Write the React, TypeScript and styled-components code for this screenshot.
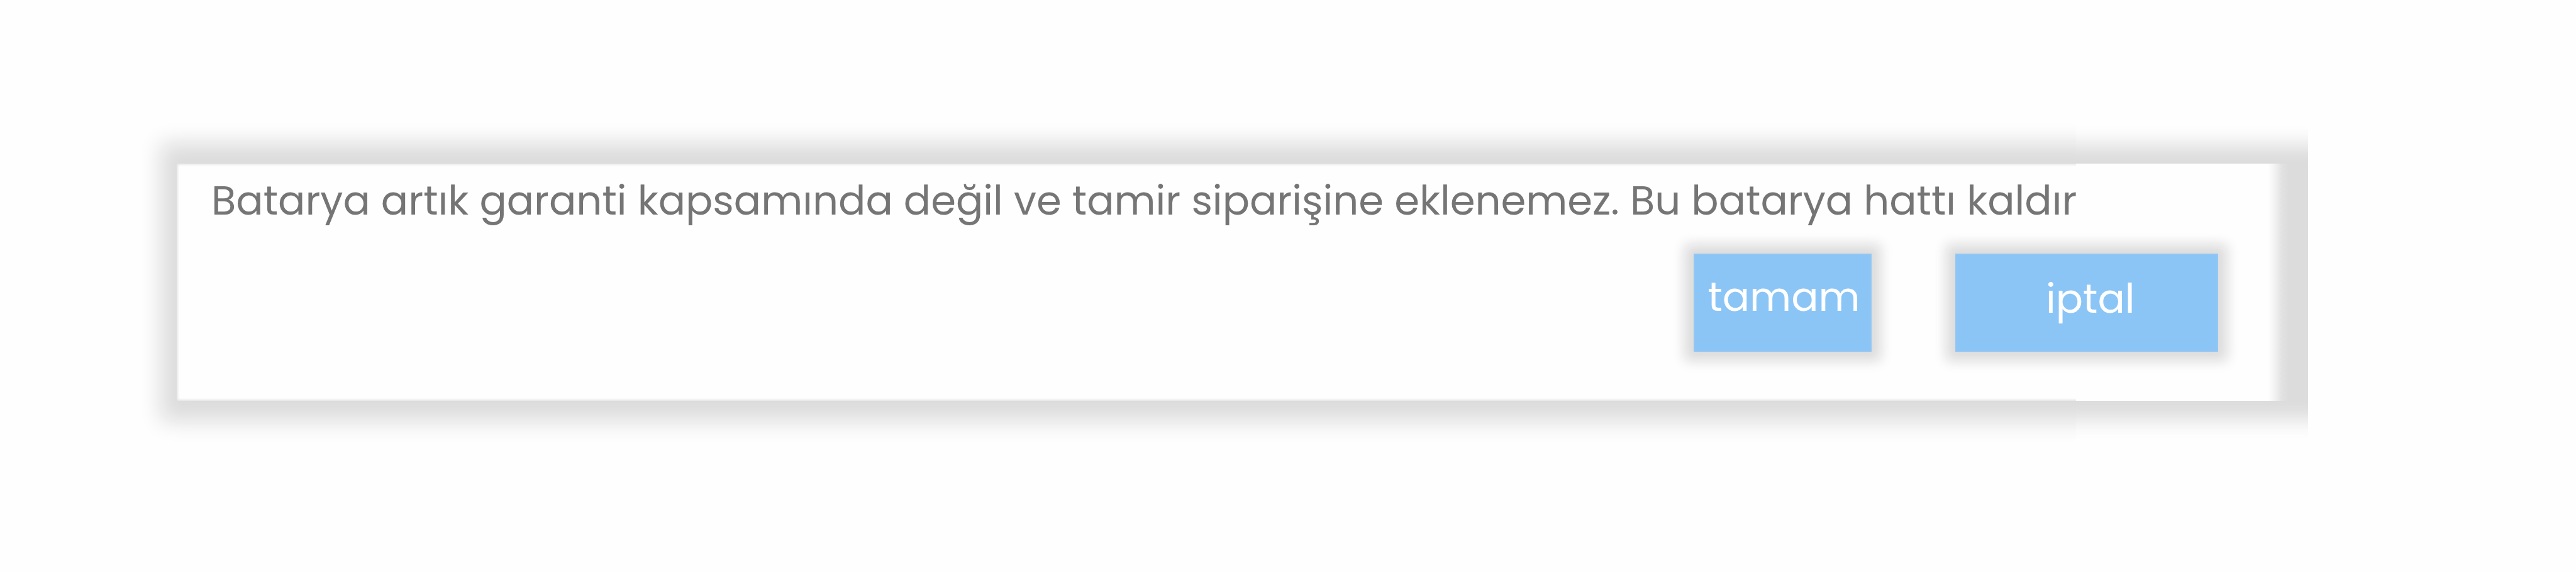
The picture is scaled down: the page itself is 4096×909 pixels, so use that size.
import styled, { createGlobalStyle } from "styled-components";

const px = (value: number) => `${(value * 4096) / 4400}px`;

const GlobalStyle = createGlobalStyle`
  html,
  body {
    margin: 0;
    background-color: #fefefe;
    overflow: hidden;
  }
`;

const Page = styled.main`
  box-sizing: border-box;
  width: ${px(4400)};
  height: ${px(976)};
  padding-left: ${px(202)};
  overflow: hidden;
  font-family: Poppins, Inter, "Open Sans", sans-serif;
`;

const Dialog = styled.section`
  display: grid;
  grid-template-columns: ${px(3344)} ${px(396)};
  grid-template-rows: ${px(976)};
`;

const Frame = styled.div<{ $end?: boolean }>`
  grid-row: 1;
  grid-column: ${({ $end }) => ($end ? 2 : 1)};
  box-sizing: border-box;
  overflow: hidden;
  display: flex;
  padding: ${({ $end }) =>
    $end
      ? `${px(279)} 0 ${px(292)}`
      : `${px(279)} 0 ${px(292)} ${px(100)}`};
`;

const Pane = styled.div`
  flex: 1;
  background-color: #fefefe;
  box-shadow:
    inset 0 0 ${px(5)} ${px(1)} #dcdcdc,
    ${px(7)} 0 ${px(35)} ${px(35)} #dcdcdc;
  margin-right: -${px(100)};
`;

const EndPane = styled.div`
  flex: none;
  width: ${px(440)};
  margin-left: -${px(100)};
  background: linear-gradient(
    to right,
    #fefefe ${px(428)},
    #f0f0f0 ${px(441)},
    #e2e2e2 ${px(451)},
    #dcdcdc ${px(463)}
  );
  padding-right: ${px(56)};
  box-shadow: 0 0 ${px(32)} ${px(32)} #dcdcdc;
`;

const Content = styled.div`
  grid-row: 1;
  grid-column: 1 / 3;
  z-index: 1;
  box-sizing: border-box;
  padding: ${px(292)} ${px(153)} 0 ${px(159)};
`;

const Message = styled.p`
  margin: 0;
  height: ${px(100)};
  line-height: ${px(100)};
  font-size: ${px(68.9)};
  color: #757575;
  white-space: nowrap;
`;

const Actions = styled.div`
  display: flex;
  justify-content: flex-end;
  gap: ${px(143)};
  padding-top: ${px(41)};
`;

const Button = styled.button<{ $width: number; $padding: string }>`
  box-sizing: border-box;
  width: ${({ $width }) => px($width)};
  height: ${px(167)};
  padding: ${({ $padding }) => $padding};
  border: none;
  background-color: #8bc5f6;
  box-shadow:
    inset 0 0 ${px(3)} #a9cdeb,
    0 0 ${px(20)} ${px(16)} #dcdcdc;
  color: #ffffff;
  font: inherit;
  font-size: ${px(68.9)};
  line-height: 1;
`;

export default function App() {
  return (
    <>
      <GlobalStyle />
      <Page>
        <Dialog role="dialog">
          <Frame>
            <Pane />
          </Frame>
          <Frame $end>
            <EndPane />
          </Frame>
          <Content>
            <Message>
              Batarya artık garanti kapsamında değil ve tamir siparişine
              eklenemez. Bu batarya hattı kaldır
            </Message>
            <Actions>
              <Button $width={304} $padding={`0 0 ${px(18)} ${px(4)}`}>
                tamam
              </Button>
              <Button $width={449} $padding={`0 0 ${px(12)} ${px(12)}`}>
                iptal
              </Button>
            </Actions>
          </Content>
        </Dialog>
      </Page>
    </>
  );
}
